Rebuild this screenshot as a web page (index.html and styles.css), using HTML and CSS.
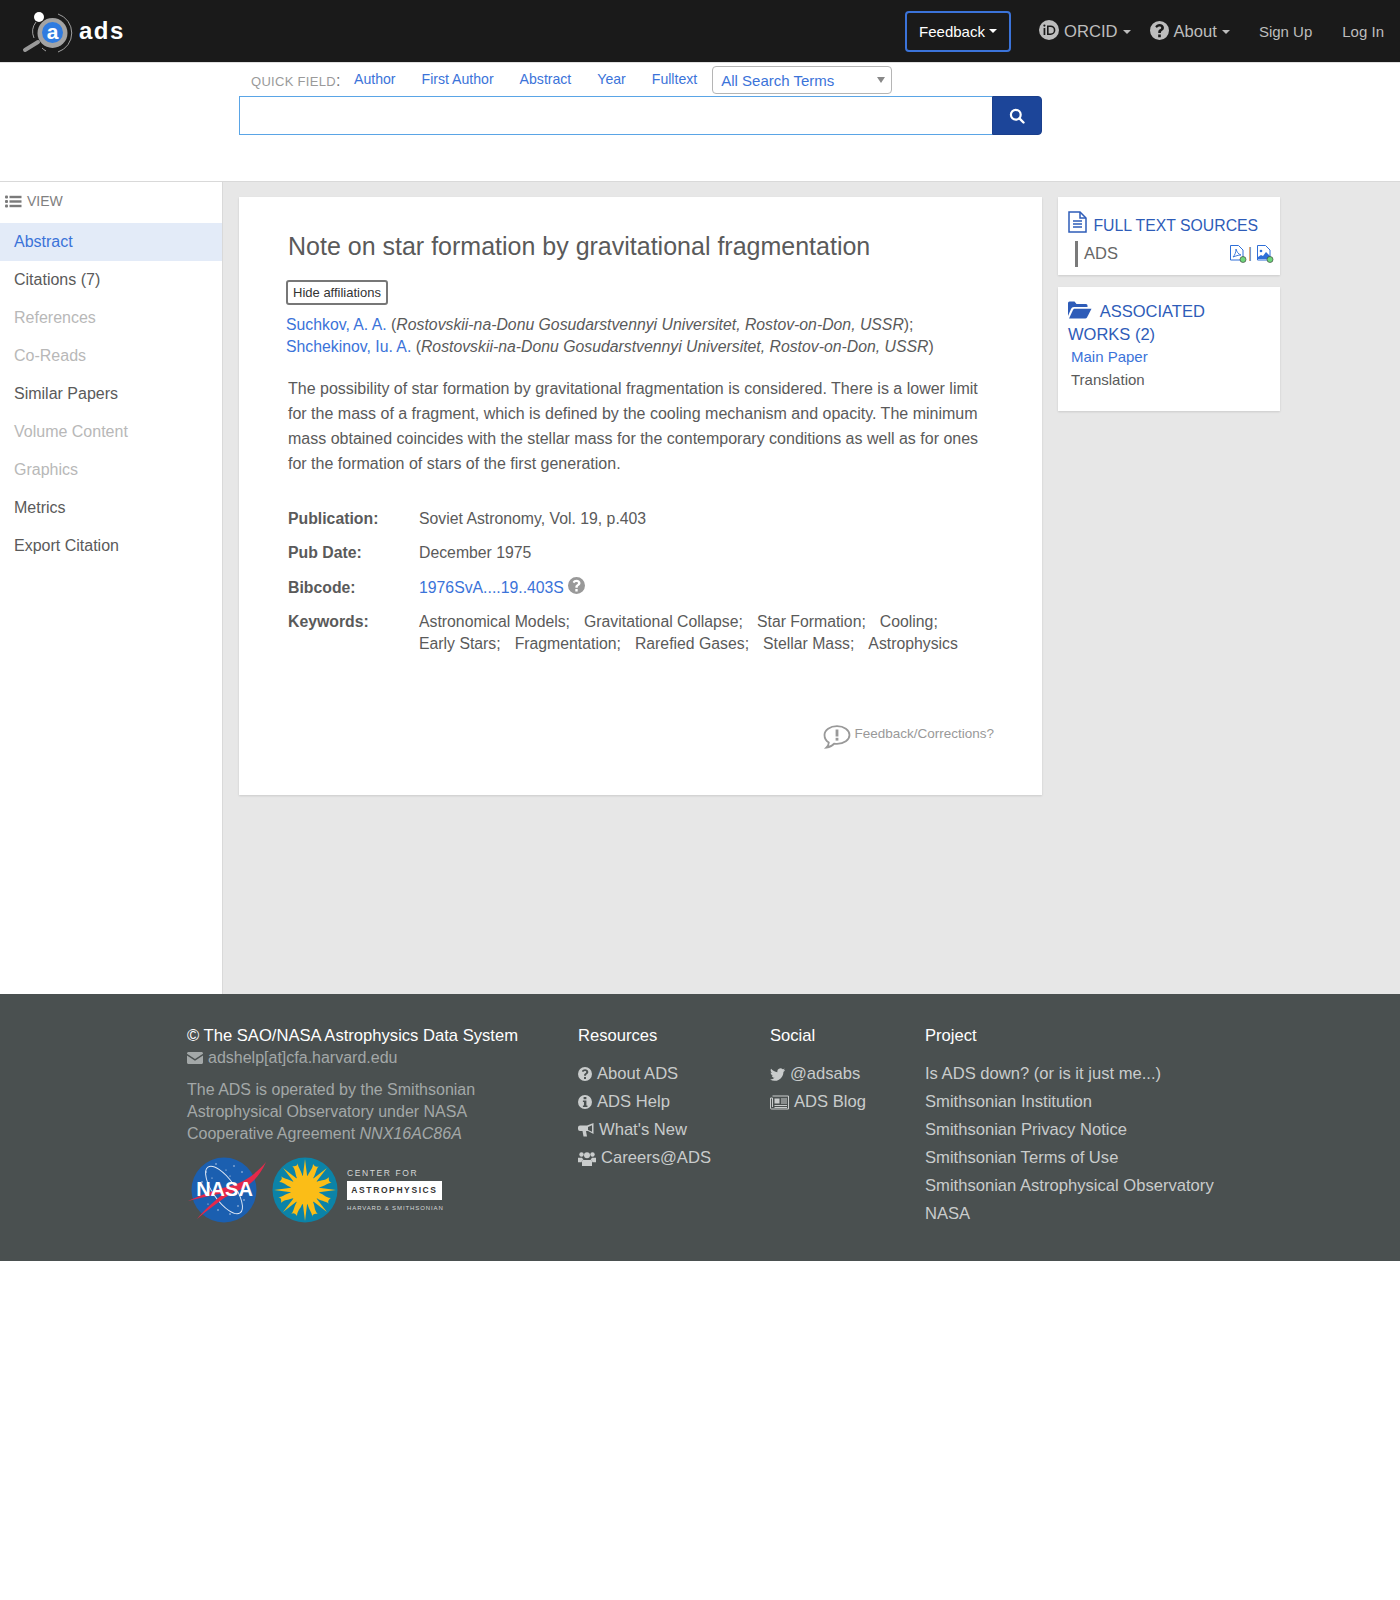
FILE: index.html
```html
<!DOCTYPE html>
<html lang="en">
<head>
  <meta charset="UTF-8">
  <title>Note on star formation by gravitational fragmentation - NASA/ADS</title>
  <link rel="stylesheet" href="styles.css">
</head>
<body>
  <header class="navbar">
    <a class="brand">
      <svg class="brand-logo" width="52" height="44" viewBox="0 0 52 44">
        <path d="M36 5a20 20 0 0 1 0 38" fill="none" stroke="#a0a0a0" stroke-width="1"/>
        <path d="M24 42a20 20 0 0 1-4-3" fill="none" stroke="#a0a0a0" stroke-width="1"/>
        <path d="M14 13a16 16 0 0 0-2 16" fill="none" stroke="#a0a0a0" stroke-width="1"/>
        <circle cx="30.500" cy="24" r="15" fill="#a3a3a3"/>
        <circle cx="30.500" cy="23.500" r="10.500" fill="#2f7be0"/>
        <line x1="16" y1="33" x2="3" y2="41" stroke="#999" stroke-width="4" stroke-linecap="round"/>
        <circle cx="17" cy="8" r="5" fill="#fff"/>
        <text x="30.500" y="30" class="brand-a">a</text>
      </svg>
      <span class="brand-name">ads</span>
    </a>
    <nav class="nav-right">
      <button class="feedback-btn">Feedback <i class="caret"></i></button>
      <a class="nav-link nav-drop orcid">
        <svg width="20" height="20" viewBox="0 0 20 20"><circle cx="10" cy="10" r="10" fill="#bdbdbd"/><rect x="4.600" y="8" width="1.700" height="7" fill="#1a1a1a"/><circle cx="5.400" cy="5.600" r="1.100" fill="#1a1a1a"/><path d="M8 5.400h3.600a4.800 4.800 0 0 1 0 9.600H8z M9.600 6.900v6.600h1.900a3.300 3.300 0 0 0 0-6.600z" fill="#1a1a1a" fill-rule="evenodd"/></svg>
        ORCID <i class="caret"></i>
      </a>
      <a class="nav-link nav-drop about">
        <svg class="ico-q" width="19" height="19" viewBox="0 0 20 20"><use href="#i-question"/></svg>
        About <i class="caret"></i>
      </a>
      <a class="nav-link signup">Sign Up</a>
      <a class="nav-link login">Log In</a>
    </nav>
  </header>

  <svg class="defs" width="0" height="0">
    <symbol id="i-question" viewBox="0 0 20 20">
      <path fill="currentColor" fill-rule="evenodd" d="M10 0a10 10 0 1 0 0 20 10 10 0 0 0 0-20zM8.600 14.200h2.800V17H8.600zM10 3.200c2.600 0 4.700 1.500 4.700 3.900 0 1.700-1 2.500-2 3.200-.8.500-1.200.9-1.200 1.600v.6H8.700v-.9c0-1.400.7-2.100 1.700-2.800.8-.5 1.400-1 1.400-1.700 0-.8-.8-1.300-1.800-1.300-1.100 0-2 .6-2.700 1.500L5.500 5.900C6.500 4.200 8 3.200 10 3.200z"/>
    </symbol>
  </svg>

  <section class="search-bar">
    <div class="search-inner">
      <div class="quick-row">
        <span class="quick-label">QUICK FIELD<b>:</b></span>
        <a class="quick-link">Author</a>
        <a class="quick-link">First Author</a>
        <a class="quick-link">Abstract</a>
        <a class="quick-link">Year</a>
        <a class="quick-link q-full">Fulltext</a>
        <div class="terms-select">All Search Terms<i class="select-caret"></i></div>
      </div>
      <div class="search-row">
        <div class="search-input"></div>
        <button class="search-btn">
          <svg width="16" height="16" viewBox="0 0 16 16"><circle cx="6.800" cy="6.800" r="4.900" fill="none" stroke="#fff" stroke-width="2.200"/><line x1="10.400" y1="10.400" x2="14.500" y2="14.500" stroke="#fff" stroke-width="2.400" stroke-linecap="round"/></svg>
        </button>
      </div>
    </div>
  </section>

  <div class="page">
    <aside class="sidebar">
      <div class="view-title">
        <svg width="17" height="13" viewBox="0 0 17 13" fill="#7a7a7a"><rect x="0" y="0.500" width="3" height="3" rx="1"/><rect x="0" y="5" width="3" height="3" rx="1"/><rect x="0" y="9.500" width="3" height="3" rx="1"/><rect x="4.500" y="0.800" width="12" height="2.400"/><rect x="4.500" y="5.300" width="12" height="2.400"/><rect x="4.500" y="9.800" width="12" height="2.400"/></svg>
        VIEW
      </div>
      <ul class="side-nav">
        <li class="active">Abstract</li>
        <li>Citations (7)</li>
        <li class="off">References</li>
        <li class="off">Co-Reads</li>
        <li>Similar Papers</li>
        <li class="off">Volume Content</li>
        <li class="off">Graphics</li>
        <li>Metrics</li>
        <li>Export Citation</li>
      </ul>
    </aside>

    <main class="abstract-card">
      <h2 class="title">Note on star formation by gravitational fragmentation</h2>
      <button class="aff-btn">Hide affiliations</button>
      <div class="authors">
        <div><a>Suchkov, A. A.</a> (<em>Rostovskii-na-Donu Gosudarstvennyi Universitet, Rostov-on-Don, USSR</em>);</div>
        <div><a>Shchekinov, Iu. A.</a> (<em>Rostovskii-na-Donu Gosudarstvennyi Universitet, Rostov-on-Don, USSR</em>)</div>
      </div>
      <p class="abstract">The possibility of star formation by gravitational fragmentation is considered. There is a lower limit for the mass of a fragment, which is defined by the cooling mechanism and opacity. The minimum mass obtained coincides with the stellar mass for the contemporary conditions as well as for ones for the formation of stars of the first generation.</p>
      <dl class="meta">
        <dt>Publication:</dt>
        <dd>Soviet Astronomy, Vol. 19, p.403</dd>
        <dt>Pub Date:</dt>
        <dd>December 1975</dd>
        <dt>Bibcode:</dt>
        <dd><a>1976SvA....19..403S</a> <svg class="bib-q" width="17" height="17" viewBox="0 0 20 20"><use href="#i-question"/></svg></dd>
        <dt>Keywords:</dt>
        <dd class="keywords">
          <span>Astronomical Models;</span><span>Gravitational Collapse;</span><span>Star Formation;</span><span>Cooling;</span><span>Early Stars;</span><span>Fragmentation;</span><span>Rarefied Gases;</span><span>Stellar Mass;</span><span>Astrophysics</span>
        </dd>
      </dl>
      <div class="corrections">
        <svg width="28" height="24" viewBox="0 0 28 24"><path d="M14 1.200c7 0 12.500 3.800 12.500 8.800s-5.500 8.800-12.500 8.800c-1 0-1.900-.1-2.800-.2C9.500 20.700 7 22 3.500 22.500c1.300-1.300 2.200-3 2.300-5C3 15.800 1.500 13.100 1.500 10 1.500 5 7 1.200 14 1.200z" fill="none" stroke="#999" stroke-width="1.800"/><rect x="12.600" y="4.500" width="2.800" height="7" fill="#999"/><rect x="12.600" y="12.800" width="2.800" height="2.800" fill="#999"/></svg>
        <span>Feedback/Corrections?</span>
      </div>
    </main>

    <div class="right-col">
      <section class="side-card sources">
        <h3 class="side-head head-small">
          <svg width="19" height="22" viewBox="0 0 19 22" fill="none" stroke="#2e5cb8" stroke-width="1.500"><path d="M1 1h11l6 6v14H1z"/><path d="M12 1v6h6"/><path d="M5 10h9M5 13h9M5 16h9"/></svg>
          FULL TEXT SOURCES
        </h3>
        <div class="source-row">
          <span class="source-name">ADS</span>
          <span class="source-icons">
            <svg width="17" height="18" viewBox="0 0 17 18"><path d="M.5.500h8l4.500 4.500v10H.5z" fill="#fff" stroke="#2e6fd8"/><path d="M3 12c2-2 3-5 3-8 1 3 2 5 5 6-3 0-5 1-8 2z" fill="none" stroke="#2e6fd8" stroke-width=".9"/><circle cx="13" cy="14.500" r="3" fill="#6fd67a" stroke="#333" stroke-width=".6"/></svg>
            <span class="sep">|</span>
            <svg width="17" height="18" viewBox="0 0 17 18"><path d="M.5.500h8l4.500 4.500v10H.5z" fill="#fff" stroke="#2e6fd8"/><circle cx="4" cy="6" r="1.300" fill="#2e6fd8"/><path d="M1 14V12l3-2 2 1 3-4 4 4v3z" fill="#2e6fd8"/><circle cx="13" cy="14.500" r="3" fill="#6fd67a" stroke="#333" stroke-width=".6"/></svg>
          </span>
        </div>
      </section>
      <section class="side-card works">
        <h3 class="side-head">
          <svg class="folder" width="24" height="18" viewBox="0 0 24 18" fill="#2e5cb8"><path d="M0 15V2a1.500 1.500 0 0 1 1.500-1.500h5L8.500 3H18a1.500 1.500 0 0 1 1.500 1.500V6H6C4.500 6 3.500 6.800 3 8z"/><path d="M1 17.500 5 9c.4-.8 1-1.200 2-1.200h16.500L19 16.500c-.4.700-1 1-1.800 1z"/></svg>
          ASSOCIATED WORKS (2)
        </h3>
        <a class="work-link">Main Paper</a>
        <span class="work-item">Translation</span>
      </section>
    </div>
  </div>

  <footer class="footer">
    <div class="foot-col col-about">
      <div class="foot-title">© The SAO/NASA Astrophysics Data System</div>
      <div class="foot-mail">
        <svg width="16" height="12" viewBox="0 0 16 12" fill="#a3a8a8"><path d="M0 1.500C0 .7.700 0 1.500 0h13c.8 0 1.500.7 1.500 1.500v.3L8 7 0 1.800z"/><path d="M0 3.500V10.500c0 .8.700 1.500 1.500 1.500h13c.8 0 1.500-.7 1.500-1.500V3.500L8 8.700z"/></svg>
        adshelp[at]cfa.harvard.edu
      </div>
      <p class="foot-text">The ADS is operated by the Smithsonian Astrophysical Observatory under NASA Cooperative Agreement <em>NNX16AC86A</em></p>
      <div class="foot-logos">
        <svg class="nasa" width="80" height="68" viewBox="0 0 80 68">
          <circle cx="36" cy="34" r="32.500" fill="#1b5fb0"/>
          <g fill="#dfe8f5">
            <circle cx="18" cy="16" r=".7"/><circle cx="28" cy="8" r=".7"/><circle cx="46" cy="10" r=".7"/><circle cx="54" cy="16" r=".7"/><circle cx="14" cy="26" r=".7"/><circle cx="24" cy="22" r=".6"/><circle cx="42" cy="20" r=".6"/><circle cx="50" cy="50" r=".7"/><circle cx="56" cy="44" r=".7"/><circle cx="30" cy="54" r=".7"/><circle cx="42" cy="58" r=".7"/><circle cx="20" cy="48" r=".6"/><circle cx="38" cy="14" r=".6"/><circle cx="60" cy="26" r=".6"/>
          </g>
          <ellipse cx="36" cy="34" rx="11" ry="28" transform="rotate(-35 36 34)" fill="none" stroke="#dfe8f5" stroke-width="1"/>
          <path d="M0 45C15 38 30 33 42 30 55 27 68 18 78 6 70 24 58 33 46 36 32 44 20 54 9 63 18 52 28 44 36 37 24 39 12 42 0 45z" fill="#e5294a"/>
          <text x="36.500" y="40" class="nasa-text">NASA</text>
        </svg>
        <svg class="sun" width="66" height="66" viewBox="-33 -33 66 66">
          <circle r="32.500" fill="#0b83a8"/>
          <g fill="#fbbd17">
            <path id="rs" d="M0-31 2.400-12H-2.400z"/>
            <use href="#rs" transform="rotate(45)"/><use href="#rs" transform="rotate(90)"/><use href="#rs" transform="rotate(135)"/><use href="#rs" transform="rotate(180)"/><use href="#rs" transform="rotate(225)"/><use href="#rs" transform="rotate(270)"/><use href="#rs" transform="rotate(315)"/>
            <g transform="rotate(22.5)">
              <path id="rw" d="M-2.500-12C-4-18-.5-21-2.500-27-.5-25.500 2.500-25 3.500-27.500 2-23 4.500-18 2.500-12z"/>
              <use href="#rw" transform="rotate(45)"/><use href="#rw" transform="rotate(90)"/><use href="#rw" transform="rotate(135)"/><use href="#rw" transform="rotate(180)"/><use href="#rw" transform="rotate(225)"/><use href="#rw" transform="rotate(270)"/><use href="#rw" transform="rotate(315)"/>
            </g>
          </g>
          <circle r="14.500" fill="#fbbd17"/>
        </svg>
        <div class="cfa">
          <div class="cfa-top">CENTER FOR</div>
          <div class="cfa-box">ASTROPHYSICS</div>
          <div class="cfa-bot">HARVARD &amp; SMITHSONIAN</div>
        </div>
      </div>
    </div>
    <div class="foot-col col-res">
      <div class="foot-title">Resources</div>
      <ul class="foot-list">
        <li><svg class="fi" width="14" height="14" viewBox="0 0 20 20"><use href="#i-question"/></svg>About ADS</li>
        <li><svg class="fi" width="14" height="14" viewBox="0 0 20 20"><path fill="currentColor" fill-rule="evenodd" d="M10 0a10 10 0 1 0 0 20 10 10 0 0 0 0-20zM8 3h4v3H8zM7 8h5v7h1.500v2h-6.500v-2H8.500v-5H7z"/></svg>ADS Help</li>
        <li><svg class="fi fi-wide" width="16" height="14" viewBox="0 0 16 14"><path fill="currentColor" fill-rule="evenodd" d="M15.500 0v11L10 8H8l1 5.500H5.500L4.500 8H2a2 2 0 0 1-2-2V4.500a2 2 0 0 1 2-2h7zM14 2.300 10 4v3l4 1.700z"/></svg>What's New</li>
        <li><svg class="fi fi-wide2" width="18" height="15" viewBox="0 0 18 15"><g fill="currentColor"><circle cx="3.500" cy="3.500" r="2.200"/><circle cx="14.500" cy="3.500" r="2.200"/><circle cx="9" cy="4.200" r="3"/><path d="M0 6.800h4c.4.700 1 1.300 1.500 1.700-1 .6-1.700 1.500-1.800 2.700H0z"/><path d="M18 6.800h-4c-.4.700-1 1.300-1.500 1.700 1 .6 1.700 1.500 1.800 2.700H18z"/><path d="M5 9h8c.5 0 1 .6 1 1.500V15H4v-4.500C4 9.600 4.500 9 5 9z"/></g></svg>Careers@ADS</li>
      </ul>
    </div>
    <div class="foot-col col-social">
      <div class="foot-title">Social</div>
      <ul class="foot-list">
        <li><svg class="fi fi-wide" width="15" height="13" viewBox="0 0 24 20"><path fill="currentColor" d="M24 2.400c-.9.400-1.800.7-2.800.8 1-.6 1.800-1.600 2.200-2.700-1 .6-2 1-3.100 1.200A4.900 4.900 0 0 0 11.900 6.200C7.800 6 4.200 4 1.700.9.400 3.100 1 6 3.200 7.500c-.8 0-1.600-.2-2.200-.6 0 2.400 1.700 4.400 3.900 4.900-.7.200-1.500.2-2.200.1.600 2 2.400 3.400 4.600 3.400A9.900 9.900 0 0 1 0 17.800 14 14 0 0 0 21.500 5.900c1-.7 1.800-1.500 2.500-3.500z"/></svg>@adsabs</li>
        <li><svg class="fi fi-news" width="19" height="15" viewBox="0 0 19 15" fill="none" stroke="currentColor"><path d="M2.500 1H18.500V14H1.500A1 1 0 0 1 .5 13V3h2v9"/><rect x="4.500" y="3.500" width="5" height="5" fill="currentColor" stroke="none"/><path d="M11 4h6M11 6h6M11 8h6M4.500 10.500H17M4.500 12.500H17"/></svg>ADS Blog</li>
      </ul>
    </div>
    <div class="foot-col col-proj">
      <div class="foot-title">Project</div>
      <ul class="foot-list">
        <li>Is ADS down? (or is it just me...)</li>
        <li>Smithsonian Institution</li>
        <li>Smithsonian Privacy Notice</li>
        <li>Smithsonian Terms of Use</li>
        <li>Smithsonian Astrophysical Observatory</li>
        <li>NASA</li>
      </ul>
    </div>
  </footer>
</body>
</html>
```

FILE: styles.css
```css
/* general */
* {
  box-sizing: border-box;
}

body {
  margin: 0;
  background: #fff;
  color: #5a5a5a;
  font-family: "Liberation Sans", Arial, sans-serif;
  font-size: 16px;
  line-height: 1.4;
}

a {
  color: #3b73d9;
  text-decoration: none;
}

.defs {
  position: absolute;
}

/* top bar */
.navbar {
  display: flex;
  align-items: center;
  justify-content: space-between;
  height: 63px;
  background: #1a1a1a;
  border-bottom: 1px solid #e0e0e0;
}

.brand {
  display: flex;
  align-items: center;
  margin-left: 22px;
}

.brand-a {
  fill: #fff;
  font-family: "Liberation Sans", sans-serif;
  font-size: 21px;
  font-weight: 700;
  text-anchor: middle;
}

.brand-name {
  margin-left: 5px;
  color: #fff;
  font-size: 24px;
  font-weight: 700;
  letter-spacing: 1.5px;
}

.nav-right {
  display: flex;
  align-items: center;
}

.feedback-btn {
  display: flex;
  align-items: center;
  gap: 4px;
  width: 106px;
  height: 41px;
  padding: 0 0 0 12px;
  margin-right: 28px;
  background: #1a1a1a;
  border: 2px solid #3b73d9;
  border-radius: 4px;
  color: #fff;
  font-family: inherit;
  font-size: 15px;
}

.caret {
  display: inline-block;
  width: 0;
  height: 0;
  border-top: 4px solid currentColor;
  border-left: 4px solid transparent;
  border-right: 4px solid transparent;
  vertical-align: middle;
}

.nav-link {
  display: flex;
  align-items: center;
  gap: 5px;
  color: #bdbdbd;
}

.nav-drop {
  padding-top: 2px;
  font-size: 16.6px;
}

.nav-drop svg {
  margin-top: -4px;
}

.about {
  margin-left: 19px;
}

.signup {
  margin-left: 29px;
  font-size: 15px;
}

.login {
  margin-left: 30px;
  margin-right: 16px;
  font-size: 15px;
}

.ico-q {
  color: #bdbdbd;
}

/* search */
.search-bar {
  height: 119px;
  padding-left: 239px;
  border-bottom: 1px solid #d9d9d9;
}

.search-inner {
  width: 803px;
}

.quick-row {
  display: flex;
  align-items: center;
  height: 33px;
  padding-top: 1px;
}

.quick-label {
  width: 103px;
  margin-left: 12px;
  padding-top: 3px;
  color: #9a9a9a;
  font-size: 13px;
  letter-spacing: .3px;
  white-space: nowrap;
}

.quick-label b {
  color: #777;
  font-weight: 400;
  font-size: 16px;
}

.quick-link {
  margin-right: 26px;
  font-size: 14.1px;
}

.q-full {
  margin-right: 15px;
}

.terms-select {
  position: relative;
  width: 180px;
  height: 28px;
  padding: 3px 8px;
  border: 1px solid #b5b5b5;
  border-radius: 4px;
  color: #3b73d9;
  font-size: 15px;
}

.select-caret {
  position: absolute;
  top: 10px;
  right: 6px;
  border-top: 6px solid #888;
  border-left: 4.5px solid transparent;
  border-right: 4.5px solid transparent;
}

.search-row {
  display: flex;
  height: 39px;
}

.search-input {
  flex: 1;
  border: 1px solid #5aa5e6;
  border-right: 0;
}

.search-btn {
  display: flex;
  align-items: center;
  justify-content: center;
  width: 50px;
  padding: 0;
  background: #1c4599;
  border: 1px solid #1a3f8c;
  border-radius: 0 4px 4px 0;
}

/* page body */
.page {
  display: flex;
  align-items: flex-start;
  height: 812px;
  background: #e7e7e7;
}

.sidebar {
  width: 223px;
  height: 100%;
  background: #fff;
  border-right: 1px solid #d9d9d9;
}

.view-title {
  display: flex;
  align-items: center;
  gap: 5px;
  height: 41px;
  padding: 0 0 2px 5px;
  color: #808080;
  font-size: 14px;
}

.side-nav {
  margin: 0;
  padding: 0;
  list-style: none;
}

.side-nav li {
  height: 38px;
  padding: 0 14px;
  color: #5a5a5a;
  font-size: 16px;
  line-height: 38px;
}

.side-nav .active {
  background: #e3ebf8;
  color: #3b73d9;
}

.side-nav .off {
  color: #b8b8b8;
}

/* abstract */
.abstract-card {
  width: 803px;
  height: 598px;
  margin: 15px 0 0 16px;
  padding: 32px 47px 0 49px;
  background: #fff;
  box-shadow: 0 1px 2px rgba(0, 0, 0, .12);
}

.title {
  margin: 0;
  color: #5a5a5a;
  font-size: 25px;
  font-weight: 400;
  line-height: 34px;
}

.aff-btn {
  display: block;
  width: 102px;
  height: 25px;
  margin: 17px 0 0 -2px;
  padding: 0;
  background: #fff;
  border: 2px solid #777;
  border-radius: 3px;
  color: #333;
  font-family: inherit;
  font-size: 13px;
}

.authors {
  margin: 9px 0 0 -2px;
  font-size: 15.8px;
  line-height: 21.5px;
}

.abstract {
  margin: 19px 0 0;
  font-size: 16px;
  line-height: 25px;
}

.meta {
  display: grid;
  grid-template-columns: 131px 1fr;
  row-gap: 10.3px;
  margin: 31px 0 0;
  font-size: 15.8px;
  line-height: 24px;
}

.meta dt {
  font-weight: 700;
}

.meta dd {
  margin: 0;
}

.meta .keywords {
  display: flex;
  flex-wrap: wrap;
  column-gap: 14px;
  margin-top: 1px;
  line-height: 22.5px;
}

.bib-q {
  color: #999;
  vertical-align: -1px;
}

.corrections {
  display: flex;
  align-items: flex-start;
  justify-content: flex-end;
  gap: 3px;
  margin-top: 69px;
  padding-right: 1px;
  color: #999;
  font-size: 13.5px;
}

/* right column */
.right-col {
  display: flex;
  flex-direction: column;
  gap: 12px;
  width: 222px;
  margin: 15px 0 0 16px;
}

.side-card {
  padding: 14px 10px 0;
  background: #fff;
  box-shadow: 0 1px 2px rgba(0, 0, 0, .12);
}

.sources {
  height: 78px;
}

.works {
  height: 124px;
  padding-top: 13px;
}

.side-head {
  margin: 0;
  color: #2e5cb8;
  font-size: 16.5px;
  font-weight: 400;
  line-height: 23px;
}

.head-small {
  font-size: 15.8px;
}

.side-head svg {
  margin-right: 2px;
  vertical-align: -2px;
}

.folder {
  margin-right: 4px !important;
}

.source-row {
  display: flex;
  align-items: center;
  justify-content: space-between;
  height: 26px;
  margin: 4px 0 0 7px;
  padding-left: 6px;
  border-left: 3px solid #7a7a7a;
  font-size: 16.5px;
  color: #666;
}

.source-icons {
  display: flex;
  align-items: center;
  gap: 1px;
  margin-right: -4px;
}

.sep {
  margin-right: 4px;
  font-size: 14px;
}

.work-link,
.work-item {
  display: block;
  margin-left: 3px;
  font-size: 15px;
  line-height: 23px;
}

.work-link {
  margin-top: -1px;
}

.work-item {
  color: #5a5a5a;
}

/* footer */
.footer {
  display: flex;
  height: 267px;
  padding: 30px 0 0 187px;
  background: #4a5050;
  color: #c9cccc;
  font-size: 16.6px;
}

.col-about {
  width: 391px;
}

.col-res {
  width: 192px;
}

.col-social {
  width: 155px;
}

.foot-title {
  color: #fff;
  line-height: 24px;
}

.foot-mail {
  display: flex;
  align-items: center;
  gap: 5px;
  margin-top: -1px;
  color: #a3a8a8;
  font-size: 16px;
  line-height: 22px;
}

.foot-text {
  width: 310px;
  margin: 10px 0 0;
  color: #a3a8a8;
  font-size: 16px;
  line-height: 22px;
}

.foot-logos {
  display: flex;
  align-items: center;
  margin-top: 11px;
}

.nasa {
  margin: 0 4px 0 1px;
}

.nasa-text {
  fill: #fff;
  font-family: "Liberation Sans", sans-serif;
  font-size: 20px;
  font-weight: 700;
  text-anchor: middle;
}

.cfa {
  margin-left: 9px;
  color: #d5d8d8;
}

.cfa-top {
  font-size: 8.5px;
  letter-spacing: 1.6px;
  line-height: 13px;
}

.cfa-box {
  width: 95px;
  height: 19px;
  margin: 1px 0 2px;
  background: #fff;
  color: #333;
  font-size: 8.5px;
  font-weight: 700;
  letter-spacing: 1.6px;
  line-height: 19px;
  text-align: center;
}

.cfa-bot {
  font-size: 6px;
  letter-spacing: .9px;
  line-height: 12px;
  white-space: nowrap;
}

.foot-list {
  margin: 12px 0 0;
  padding: 0;
  list-style: none;
}

.foot-list li {
  display: flex;
  align-items: center;
  height: 28px;
}

.fi {
  margin-right: 5px;
  color: #c9cccc;
}
```
